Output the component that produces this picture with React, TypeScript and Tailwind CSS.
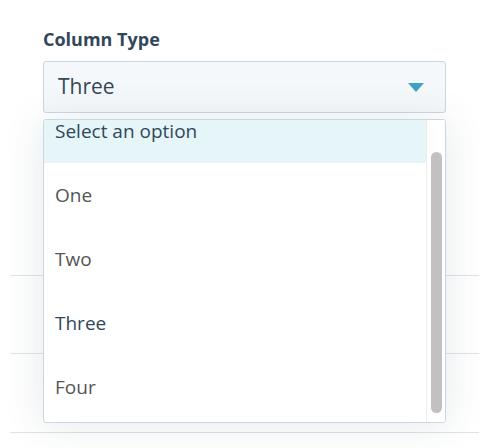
import React from "react";

const options = ["Select an option", "One", "Two", "Three", "Four"];

function Caret() {
  return (
    <svg width="16" height="9" viewBox="0 0 16 9" className="shrink-0">
      <path d="M0 0 H16 L8 9 Z" fill="#3fa2be" />
    </svg>
  );
}

function OptionRow({ label, active }: { label: string; active: boolean }) {
  const muted = label === "One" || label === "Two" || label === "Four";
  return (
    <div
      className={`h-[64px] flex items-center pl-[11px] text-[19px] ${
        active ? "bg-[#e5f5f8]" : "bg-white"
      } ${muted ? "text-[#555]" : "text-[#33475b]"}`}
    >
      {label}
    </div>
  );
}

export default function App() {
  return (
    <div
      className="relative w-[500px] h-[448px] bg-white overflow-hidden"
      style={{ fontFamily: '"Open Sans", "Lato", sans-serif' }}
    >
      <div className="px-[43px] pt-[27px]">
        <div className="text-[18px] leading-[24px] font-bold text-[#33475b]">
          Column Type
        </div>
        <div className="mt-[10px] w-[403px] h-[52px] flex items-center justify-between pl-[14px] pr-[21px] bg-[#f5f8fa] border border-[#cbd6e2] rounded-[3px]">
          <span className="text-[21px] text-[#33475b]">Three</span>
          <Caret />
        </div>
      </div>

      {/* page rows behind the open menu */}
      <div className="mt-[162px] ml-[10px] w-[469px]">
        <div className="h-[78px] border-t border-[#dfe3eb]" />
        <div className="h-[79px] border-t border-[#dfe3eb]" />
        <div className="border-t border-[#dfe3eb]" />
      </div>

      {/* open dropdown */}
      <div className="absolute left-[43px] top-[119px] w-[403px] h-[304px] flex bg-white border border-[#cbd6e2] rounded-[3px] shadow-[0_2px_40px_rgba(45,62,80,0.12)] overflow-hidden">
        <div className="flex-1 overflow-hidden">
          <div className="-mt-[21px]">
            {options.map((o, i) => (
              <OptionRow key={o} label={o} active={i === 0} />
            ))}
          </div>
        </div>
        <div className="w-[19px] border-l border-[#ececec] bg-white pt-[32px] pb-[9px] flex justify-center">
          <div className="w-[11px] h-full rounded-full bg-[#c1c1c1]" />
        </div>
      </div>
    </div>
  );
}
